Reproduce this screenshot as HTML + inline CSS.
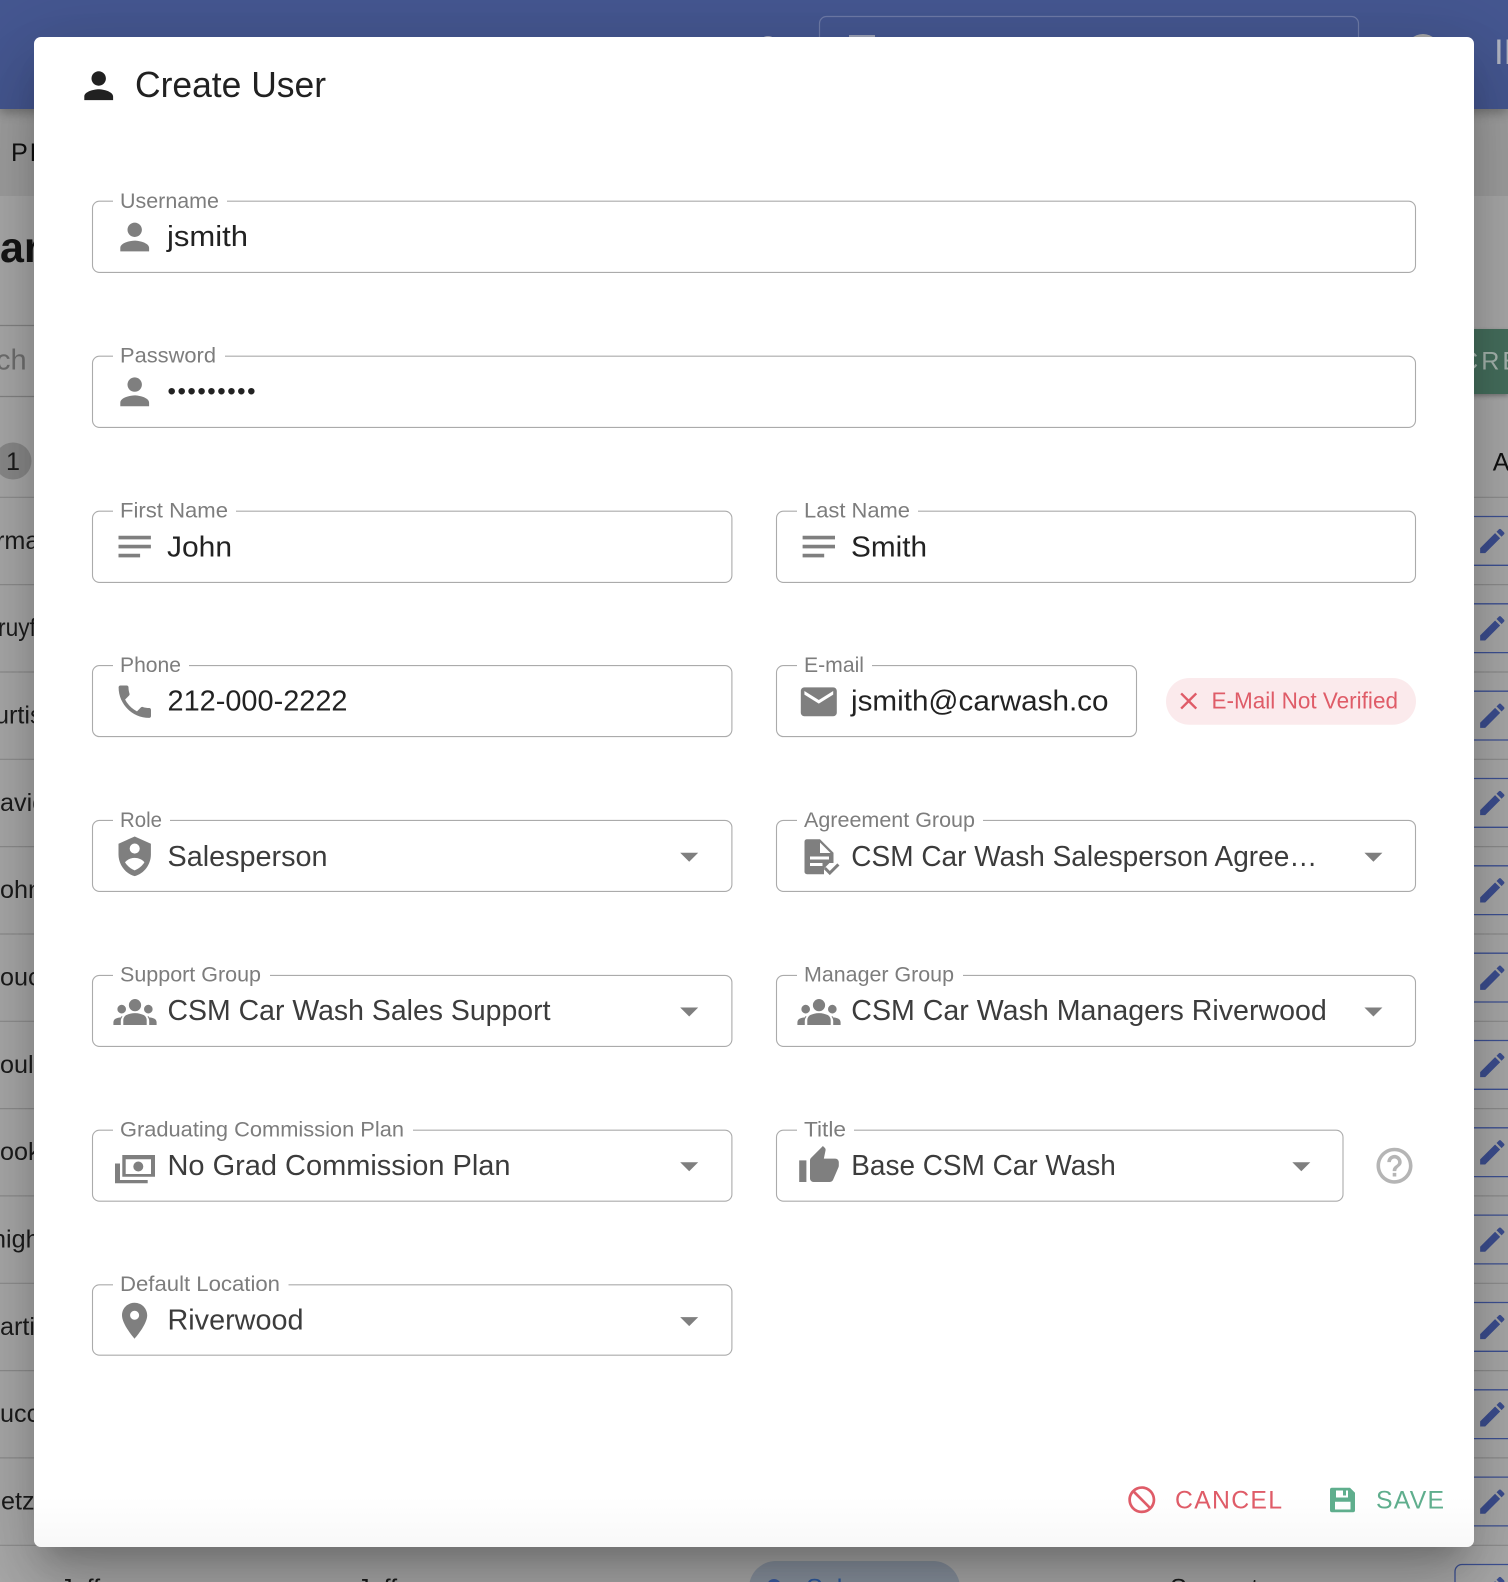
<!DOCTYPE html>
<html><head><meta charset="utf-8"><title>Create User</title>
<style>
html,body{margin:0;padding:0;width:1508px;height:1582px;overflow:hidden;background:#aaa}
body{position:relative;font-family:"Liberation Sans",sans-serif}
.a{position:absolute}
svg{position:absolute;left:0;top:0;font-family:"Liberation Sans",sans-serif}
.lb{font-size:21.6px;fill:#7d7d7d}
.v{font-size:28.8px;fill:#222}
.s{font-size:28.8px;fill:#3c3c3c}
.f{fill:#fff;stroke:#ababab;stroke-width:1.1}
.g{fill:#fff}
.ic{fill:#7f7f7f}
.t{font-size:25.2px;fill:#1c1c1c}
</style></head>
<body>
<div class="a" style="left:0;top:0;width:1508px;height:196px;background:#a0a0a0"></div>
<div class="a" style="left:0;top:196px;width:1508px;height:1386px;background:#ababab"></div>
<div class="a" style="left:0;top:0;width:1508px;height:109px;background:#455791;box-shadow:0 4px 10px rgba(0,0,0,.28)"></div>

<svg width="1508" height="1582" viewBox="0 0 1508 1582">
<rect x="819.5" y="16.5" width="539" height="60" rx="7" fill="none" stroke="#6e7ba8" stroke-width="1.2"/>
<rect x="849" y="35" width="26" height="20" fill="#9da3b8"/>
<circle cx="768" cy="45" r="9" fill="#a5a9bb"/>
<circle cx="1423" cy="51" r="17" fill="#a7a7a7"/>
<text x="1494" y="64" font-size="35" fill="#b2b5c2">IN</text>
<text x="11" y="161" font-size="25.2" fill="#111" letter-spacing="2">PEOPLE</text>
<text x="0" y="262" font-size="43" font-weight="bold" fill="#161616">ar</text>
<g stroke="#858585" stroke-width="1.2">
<path d="M0 325.500H34M0 396.500H34"/>
</g>
<text x="-4" y="369.500" font-size="29" fill="#707070">ch</text>
<circle cx="13" cy="461" r="18.500" fill="#8b8b8b"/>
<text x="6" y="470" font-size="25.2" fill="#1c1c1c">1</text>
<text x="1492.7" y="470.5" font-size="25.2" fill="#111">A</text>
<rect x="1440" y="329" width="68" height="65" fill="#46705e" style="filter:drop-shadow(0 2px 2px rgba(0,0,0,.3))"/>
<text x="1460" y="369.5" font-size="25.2" fill="#a9b8b1" letter-spacing="3">CREATE</text>
<g stroke="#8f8f8f" stroke-width="1.2" fill="none">
<path d="M0 497.3H1508M0 584.6H1508M0 672H1508M0 759.3H1508M0 846.6H1508M0 934H1508M0 1021.3H1508M0 1108.6H1508M0 1195.9H1508M0 1283.3H1508M0 1370.6H1508M0 1457.9H1508M0 1545.3H1508"/>
</g>
<g stroke="#3e5296" stroke-width="1.3" fill="none">
<path d="M1460 516.5H1508M1460 565.3H1508M1460 603.8H1508M1460 652.6H1508M1460 691.2H1508M1460 740H1508M1460 778.5H1508M1460 827.3H1508M1460 865.8H1508M1460 914.6H1508M1460 953.2H1508M1460 1002H1508M1460 1040.5H1508M1460 1089.3H1508M1460 1127.8H1508M1460 1176.6H1508M1460 1215.1H1508M1460 1263.9H1508M1460 1302.5H1508M1460 1351.3H1508M1460 1389.8H1508M1460 1438.6H1508M1460 1477.1H1508M1460 1525.9H1508"/>
<path d="M1508 1564.5H1462a7 7 0 0 0-7 7V1582"/>
</g>
<defs><path id="pen" d="M3 17.25V21h3.75L17.81 9.94l-3.75-3.75L3 17.25zM20.71 7.04c.39-.39.39-1.02 0-1.41l-2.34-2.34c-.39-.39-1.02-.39-1.41 0l-1.83 1.83 3.75 3.75 1.83-1.83z"/></defs>
<g fill="#3d4f91">
<use href="#pen" transform="translate(1476.1 524.8) scale(1.35)"/>
<use href="#pen" transform="translate(1476.1 612.1) scale(1.35)"/>
<use href="#pen" transform="translate(1476.1 699.5) scale(1.35)"/>
<use href="#pen" transform="translate(1476.1 786.8) scale(1.35)"/>
<use href="#pen" transform="translate(1476.1 874.1) scale(1.35)"/>
<use href="#pen" transform="translate(1476.1 961.5) scale(1.35)"/>
<use href="#pen" transform="translate(1476.1 1048.8) scale(1.35)"/>
<use href="#pen" transform="translate(1476.1 1136.1) scale(1.35)"/>
<use href="#pen" transform="translate(1476.1 1223.4) scale(1.35)"/>
<use href="#pen" transform="translate(1476.1 1310.8) scale(1.35)"/>
<use href="#pen" transform="translate(1476.1 1398.1) scale(1.35)"/>
<use href="#pen" transform="translate(1476.1 1485.4) scale(1.35)"/>
<use href="#pen" transform="translate(1476.1 1572.8) scale(1.35)"/>
</g>
<g class="tx">
<text class="t" x="-4" y="548.8">rma</text>
<text class="t" x="-2" y="636.2" textLength="38" lengthAdjust="spacingAndGlyphs">ruyf</text>
<text class="t" x="-5" y="723.6">urtis</text>
<text class="t" x="0" y="810.8">avid</text>
<text class="t" x="0" y="898.2">ohn</text>
<text class="t" x="0" y="985.5">ouc</text>
<text class="t" x="0" y="1072.8">oul</text>
<text class="t" x="0" y="1160.1">ook</text>
<text class="t" x="-8" y="1247.5">nigh</text>
<text class="t" x="0" y="1334.8">arti</text>
<text class="t" x="0" y="1422.1">ucc</text>
<text class="t" x="1" y="1509.4">etz</text>
<text class="t" x="60" y="1596.3">Jeffrey</text>
<text class="t" x="357" y="1596.3">Jeffrey</text>
<text class="t" x="1170" y="1596.3">Support</text>
</g>
<rect x="749" y="1561" width="211" height="60" rx="27" fill="#89929f"/>
<circle cx="774" cy="1586" r="7" fill="#3d5da0"/>
<text x="806" y="1596.3" font-size="25.2" fill="#2f5aa0">Salesperson</text>
</svg>

<div class="a" style="left:34px;top:37px;width:1440px;height:1510px;border-radius:7px;background:linear-gradient(to bottom,#fff 0,#fff 1460px,#f8f8f8 100%);box-shadow:0 20px 27px -13px rgba(0,0,0,.2),0 43px 68px 5px rgba(0,0,0,.14),0 16px 83px 14px rgba(0,0,0,.12)"></div>

<svg width="1508" height="1582" viewBox="0 0 1508 1582">
<defs>
<path id="person" d="M12 12c2.21 0 4-1.79 4-4s-1.79-4-4-4-4 1.79-4 4 1.79 4 4 4zm0 2c-2.67 0-8 1.34-8 4v2h16v-2c0-2.66-5.33-4-8-4z"/>
<path id="notes" d="M3 18h12v-2H3v2zM3 6v2h18V6H3zm0 7h18v-2H3v2z"/>
<path id="groups" d="M12 4.800a3.400 3.400 0 1 0 0 6.800 3.400 3.400 0 1 0 0-6.800zM4.600 8a2.400 2.400 0 1 0 0 4.800 2.400 2.400 0 1 0 0-4.800zM19.400 8a2.400 2.400 0 1 0 0 4.800 2.400 2.400 0 1 0 0-4.800zM12 12.600c2 0 3.600.5 4.800 1.100 1 .5 1.700 1.600 1.700 2.800v2.700H5.500v-2.700c0-1.200.7-2.300 1.700-2.800 1.200-.6 2.800-1.100 4.800-1.100zM4.200 14.400c.3 0 .6 0 .9.1-.6.7-1 1.600-1 2.600v2.100H0v-1.400c0-.9.5-1.700 1.300-2.100.9-.4 1.900-.7 2.900-.7zM19.800 14.400c-.3 0-.6 0-.9.1.6.7 1 1.600 1 2.600v2.100H24v-1.400c0-.9-.5-1.700-1.300-2.100-.9-.4-1.900-.7-2.900-.7z"/>
<path id="arrow" d="M7 10l5 5 5-5z"/>
</defs>

<use href="#person" fill="#212121" transform="translate(77.1 64.1) scale(1.8)"/>
<text x="135" y="97" font-size="36" fill="#212121" textLength="191" lengthAdjust="spacingAndGlyphs">Create User</text>

<!-- fields -->
<rect class="f" x="92.5" y="201.2" width="1323" height="71.2" rx="7"/>
<rect class="g" x="113" y="199" width="114" height="4"/>
<text class="lb" x="120" y="208" textLength="99" lengthAdjust="spacingAndGlyphs">Username</text>
<use href="#person" class="ic" transform="translate(113.1 215.4) scale(1.8)"/>
<text class="v" x="167" y="246" textLength="81" lengthAdjust="spacingAndGlyphs">jsmith</text>

<rect class="f" x="92.5" y="356.2" width="1323" height="71.2" rx="7"/>
<rect class="g" x="113" y="354" width="112" height="4"/>
<text class="lb" x="120" y="362.3" textLength="96" lengthAdjust="spacingAndGlyphs">Password</text>
<use href="#person" class="ic" transform="translate(113.1 370.2) scale(1.8)"/>
<g fill="#222"><text x="167.500" y="399" font-size="24" textLength="88" lengthAdjust="spacing">•••••••••</text></g>

<rect class="f" x="92.5" y="511.2" width="639.4" height="71.2" rx="7"/>
<rect class="g" x="113" y="509" width="123" height="4"/>
<text class="lb" x="120" y="517.6" textLength="108" lengthAdjust="spacingAndGlyphs">First Name</text>
<use href="#notes" class="ic" transform="translate(113.1 525) scale(1.8)"/>
<text class="v" x="167" y="556.3" textLength="65" lengthAdjust="spacingAndGlyphs">John</text>

<rect class="f" x="776.5" y="511.2" width="639" height="71.2" rx="7"/>
<rect class="g" x="797" y="509" width="121" height="4"/>
<text class="lb" x="804" y="517.6" textLength="106" lengthAdjust="spacingAndGlyphs">Last Name</text>
<use href="#notes" class="ic" transform="translate(797.2 525) scale(1.8)"/>
<text class="v" x="851" y="556.3" textLength="76" lengthAdjust="spacingAndGlyphs">Smith</text>

<rect class="f" x="92.5" y="665.6" width="639.4" height="71" rx="7"/>
<rect class="g" x="113" y="663.6" width="76" height="4"/>
<text class="lb" x="120" y="671.900" textLength="61" lengthAdjust="spacingAndGlyphs">Phone</text>
<path class="ic" transform="translate(113.2 680.1) scale(1.8)" d="M6.62 10.79c1.44 2.83 3.76 5.14 6.59 6.59l2.2-2.2c.27-.27.67-.36 1.02-.24 1.12.37 2.33.57 3.57.57.55 0 1 .45 1 1V20c0 .55-.45 1-1 1-9.39 0-17-7.61-17-17 0-.55.45-1 1-1h3.5c.55 0 1 .45 1 1 0 1.25.2 2.45.57 3.57.11.35.03.74-.25 1.02l-2.2 2.2z"/>
<text class="v" x="167.5" y="710.4" textLength="180" lengthAdjust="spacingAndGlyphs">212-000-2222</text>

<rect class="f" x="776.5" y="665.6" width="360" height="71" rx="7"/>
<rect class="g" x="797" y="663.6" width="75" height="4"/>
<text class="lb" x="804" y="671.900" textLength="60" lengthAdjust="spacingAndGlyphs">E-mail</text>
<path class="ic" transform="translate(797.2 680.2) scale(1.8)" d="M20 4H4c-1.1 0-1.99.9-1.99 2L2 18c0 1.1.9 2 2 2h16c1.100 0 2-.9 2-2V6c0-1.1-.9-2-2-2zm0 4l-8 5-8-5V6l8 5 8-5v2z"/>
<text class="v" x="851" y="710.4" textLength="257.500" lengthAdjust="spacingAndGlyphs">jsmith@carwash.co</text>

<rect x="1166" y="678" width="250" height="46.8" rx="23.4" fill="#fbeaec"/>
<path fill="#df5c68" transform="translate(1174.3 686.6) scale(1.2)" d="M19 6.410L17.590 5 12 10.590 6.410 5 5 6.410 10.590 12 5 17.590 6.410 19 12 13.410 17.590 19 19 17.590 13.410 12z"/>
<text x="1211.5" y="708.5" font-size="23" fill="#df5c68" textLength="186.500" lengthAdjust="spacingAndGlyphs">E-Mail Not Verified</text>

<rect class="f" x="92.5" y="820.4" width="639.4" height="71" rx="7"/>
<rect class="g" x="113" y="818.400" width="57" height="4"/>
<text class="lb" x="120" y="827.2" textLength="42" lengthAdjust="spacingAndGlyphs">Role</text>
<path class="ic" fill-rule="evenodd" transform="translate(113.1 834.700) scale(1.8)" d="M12 1L3 5v6c0 5.55 3.84 10.74 9 12 5.16-1.26 9-6.45 9-12V5l-9-4zM12 4.900a2.800 2.800 0 1 1 0 5.600 2.800 2.800 0 0 1 0-5.600zM6.600 15.300c1.400-1.600 3.400-2.400 5.400-2.400s4 .8 5.400 2.400c-1.200 2-3.100 3.600-5.400 4.500-2.300-.9-4.200-2.500-5.400-4.500z"/>
<text class="s" x="167.5" y="866" textLength="160" lengthAdjust="spacingAndGlyphs">Salesperson</text>
<use href="#arrow" class="ic" transform="translate(667.600 834.700) scale(1.8)"/>

<rect class="f" x="776.5" y="820.4" width="639" height="71" rx="7"/>
<rect class="g" x="797" y="818.400" width="186" height="4"/>
<text class="lb" x="804" y="827.2" textLength="171" lengthAdjust="spacingAndGlyphs">Agreement Group</text>
<path class="ic" fill-rule="evenodd" d="M807 839.200h13l13.500 13.500v10.300l-4 0-5.500 5.500 0 5.700H807a2.500 2.500 0 0 1-2.500-2.500v-30a2.500 2.500 0 0 1 2.500-2.500zM820 842.500v10.500h10.500z"/>
<path fill="#fff" d="M810 856.500h19v3h-19zM810 863h12.500v3H810z"/>
<path fill="none" stroke="#7f7f7f" stroke-width="3" d="M824.800 868l5 5 8.600-8.600"/>
<text class="s" x="851.300" y="866" textLength="466" lengthAdjust="spacingAndGlyphs">CSM Car Wash Salesperson Agree…</text>
<use href="#arrow" class="ic" transform="translate(1351.800 834.700) scale(1.8)"/>

<rect class="f" x="92.5" y="975.4" width="639.4" height="71" rx="7"/>
<rect class="g" x="113" y="973.400" width="157" height="4"/>
<text class="lb" x="120" y="981.500" textLength="141" lengthAdjust="spacingAndGlyphs">Support Group</text>
<use href="#groups" class="ic" transform="translate(113.400 990.400) scale(1.8)"/>
<text class="s" x="167.500" y="1020" textLength="383" lengthAdjust="spacingAndGlyphs">CSM Car Wash Sales Support</text>
<use href="#arrow" class="ic" transform="translate(667.600 989.500) scale(1.8)"/>

<rect class="f" x="776.5" y="975.4" width="639" height="71" rx="7"/>
<rect class="g" x="797" y="973.400" width="166" height="4"/>
<text class="lb" x="804" y="981.500" textLength="150" lengthAdjust="spacingAndGlyphs">Manager Group</text>
<use href="#groups" class="ic" transform="translate(797.400 990.400) scale(1.8)"/>
<text class="s" x="851.300" y="1020" textLength="475.500" lengthAdjust="spacingAndGlyphs">CSM Car Wash Managers Riverwood</text>
<use href="#arrow" class="ic" transform="translate(1351.800 989.500) scale(1.8)"/>

<rect class="f" x="92.5" y="1130.2" width="639.4" height="71" rx="7"/>
<rect class="g" x="113" y="1128.200" width="300" height="4"/>
<text class="lb" x="120" y="1136.300" textLength="284" lengthAdjust="spacingAndGlyphs">Graduating Commission Plan</text>
<path class="ic" fill-rule="evenodd" d="M122.300 1155H155v21.700h-32.700zM125.700 1159.300V1174H151v-14.700zM133.300 1166.500a5 5 0 1 0 10 0 5 5 0 1 0-10 0z"/>
<path class="ic" d="M115 1163.500h5v16.500h27.700v3.300H115z"/>
<text class="s" x="167.500" y="1174.800" textLength="343" lengthAdjust="spacingAndGlyphs">No Grad Commission Plan</text>
<use href="#arrow" class="ic" transform="translate(667.600 1144.300) scale(1.8)"/>

<rect class="f" x="776.5" y="1130.2" width="566.500" height="71" rx="7"/>
<rect class="g" x="797" y="1128.200" width="57" height="4"/>
<text class="lb" x="804" y="1136.300" textLength="42" lengthAdjust="spacingAndGlyphs">Title</text>
<path class="ic" transform="translate(797.400 1144.200) scale(1.8)" d="M1 21h4V9H1v12zm22-11c0-1.100-.9-2-2-2h-6.310l.95-4.570.03-.32c0-.41-.17-.79-.44-1.060L14.170 1 7.590 7.590C7.220 7.950 7 8.450 7 9v10c0 1.100.9 2 2 2h9c.83 0 1.540-.5 1.840-1.220l3.020-7.050c.09-.23.14-.47.14-.73v-2z"/>
<text class="s" x="851.300" y="1174.800" textLength="264.500" lengthAdjust="spacingAndGlyphs">Base CSM Car Wash</text>
<use href="#arrow" class="ic" transform="translate(1279.700 1144.300) scale(1.8)"/>
<path fill="#b5b5b5" transform="translate(1372.900 1144.100) scale(1.8)" d="M11 18h2v-2h-2v2zm1-16C6.480 2 2 6.480 2 12s4.480 10 10 10 10-4.480 10-10S17.520 2 12 2zm0 18c-4.410 0-8-3.590-8-8s3.590-8 8-8 8 3.590 8 8-3.590 8-8 8zm0-14c-2.210 0-4 1.790-4 4h2c0-1.100.9-2 2-2s2 .9 2 2c0 2-3 1.750-3 5h2c0-2.250 3-2.500 3-5 0-2.210-1.790-4-4-4z"/>

<rect class="f" x="92.5" y="1284.8" width="639.4" height="70.400" rx="7"/>
<rect class="g" x="113" y="1282.800" width="175.500" height="4"/>
<text class="lb" x="120" y="1291.100" textLength="160" lengthAdjust="spacingAndGlyphs">Default Location</text>
<path class="ic" transform="translate(113 1299.100) scale(1.8)" d="M12 2C8.130 2 5 5.130 5 9c0 5.250 7 13 7 13s7-7.750 7-13c0-3.870-3.130-7-7-7zm0 9.500c-1.380 0-2.500-1.120-2.500-2.500s1.120-2.500 2.500-2.500 2.500 1.120 2.500 2.500-1.120 2.500-2.500 2.500z"/>
<text class="s" x="167.500" y="1329.600" textLength="136" lengthAdjust="spacingAndGlyphs">Riverwood</text>
<use href="#arrow" class="ic" transform="translate(667.600 1299.100) scale(1.8)"/>

<!-- actions -->
<path fill="#df5c68" transform="translate(1158 1483.500) scale(-1.35 1.35)" d="M12 2C6.480 2 2 6.480 2 12s4.480 10 10 10 10-4.480 10-10S17.520 2 12 2zM4 12c0-4.420 3.580-8 8-8 1.850 0 3.550.63 4.900 1.690L5.690 16.900C4.630 15.550 4 13.850 4 12zm8 8c-1.850 0-3.550-.63-4.900-1.690L18.310 7.100C19.370 8.450 20 10.150 20 12c0 4.420-3.580 8-8 8z"/>
<text x="1175" y="1508.700" font-size="24.800" fill="#df5c68" textLength="107" lengthAdjust="spacing">CANCEL</text>
<path fill="#5fae8d" fill-rule="evenodd" d="M1332 1487.700h18l5 5v17.600a2 2 0 0 1-2 2h-21a2 2 0 0 1-2-2v-20.600a2 2 0 0 1 2-2zM1335 1501.700v7.800h15.500v-7.800zM1336 1490.500v7h12v-7h-2v5h-3v-5z"/>
<text x="1376" y="1508.700" font-size="24.800" fill="#5fae8d" textLength="68" lengthAdjust="spacing">SAVE</text>
</svg>
</body></html>
